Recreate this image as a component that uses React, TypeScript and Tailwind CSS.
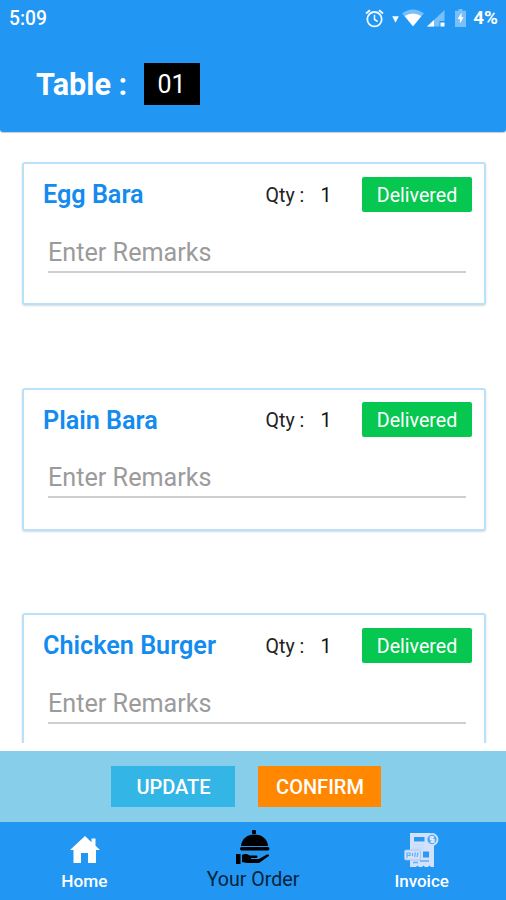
interface OrderItem {
  id: number;
  name: string;
  qty: number;
  status: string;
}

const orderItems: OrderItem[] = [
  { id: 1, name: 'Egg Bara', qty: 1, status: 'Delivered' },
  { id: 2, name: 'Plain Bara', qty: 1, status: 'Delivered' },
  { id: 3, name: 'Chicken Burger', qty: 1, status: 'Delivered' },
];

function StatusBar() {
  return (
    <div className="flex h-9 items-center justify-between pl-[9px] pr-2 text-[19.3px] font-medium text-white">
      <span className="pt-0.5">5:09</span>
      <div className="flex items-center">
        {/* Alarm */}
        <svg width="19" height="19" viewBox="0 0 19 19" fill="none" stroke="#f4faff" strokeWidth="1.8">
          <circle cx="9.5" cy="10.2" r="7.2" />
          <path d="M1 4.6 5 1.3M18 4.6l-4-3.3" strokeWidth="2" />
          <path d="M9.5 5.8v4.7l3.2 2" strokeWidth="1.5" />
        </svg>
        <svg className="ml-[8px] mt-0.5" width="7" height="7" viewBox="0 0 7 7" fill="#f4faff">
          <path d="M.2.3h6.6L3.5 6.8z" />
        </svg>
        {/* Wifi */}
        <svg className="ml-[3px]" width="22" height="18" viewBox="0 0 22 18">
          <path d="M0 4.2Q11-3.4 22 4.2L11 17.5z" fill="#79bff9" />
          <path d="M2.6 7Q11 1.8 19.4 7L11 17.2z" fill="#fff" />
        </svg>
        {/* Mobile signal */}
        <svg className="ml-[3px]" width="18" height="17" viewBox="0 0 18 17">
          <path d="M0 16.5 17.5 0v11h-5v5.5z" fill="#79bff9" />
          <path d="M0 16.5 7 10v6.5zM13.5 12.5h4v4h-4z" fill="#fff" />
        </svg>
        {/* Battery */}
        <svg className="ml-[10px]" width="11" height="18" viewBox="0 0 11 18">
          <path d="M3.5 0h4v1.7H11V18H0V1.7h3.5z" fill="#79bff9" />
          <path d="M6.5 3.8 2.6 10h2.3v4.5l3.7-6.2H6.5z" fill="#fff" />
        </svg>
        <span className="ml-[7px] text-[18.8px] font-bold">4%</span>
      </div>
    </div>
  );
}

function OrderCard({ item }: { item: OrderItem }) {
  return (
    <div className="h-[143px] shrink-0 rounded-[3px] border-2 border-[#b9e2f9] bg-white pl-[19px] pr-3 pt-3 shadow-[0_1px_2px_rgba(0,0,0,0.15)]">
      <div className="flex h-9 items-center">
        <span className="w-[222.5px] pt-0.5 text-[25.2px] font-semibold text-[#148bee]">{item.name}</span>
        <span className="w-[55px] pt-[3px] text-[19.6px] text-[#222]">Qty :</span>
        <span className="pt-[3px] text-[19.6px] text-[#111]">{item.qty}</span>
        <span className="ml-auto flex h-[35px] w-[110px] items-center justify-center rounded-[2px] bg-[#06c74f] pt-[3px] text-[19.6px] text-white">
          {item.status}
        </span>
      </div>
      <input
        className="ml-[5px] mt-[20px] block h-[40.5px] w-[418px] border-b-2 border-[#cfcfcf] bg-transparent pt-0.5 text-[25.2px] outline-none placeholder:text-[#9b9b9b]"
        placeholder="Enter Remarks"
      />
    </div>
  );
}

function HomeIcon() {
  return (
    <svg className="ml-px" width="30" height="28" viewBox="0 0 30 28" fill="#fff">
      <path d="M15 0 0 14h3.5v13H11V17h7v10h8V14h4l-4.5-4.2V2.5h-4v3.7z" />
    </svg>
  );
}

function ServeIcon() {
  return (
    <svg width="34" height="35" viewBox="0 0 34 35" fill="#000">
      <rect x="16" y="0" width="4" height="4" rx="1" />
      <path d="M5 16C5.5 9 11 4.5 18.5 4.5S31.5 9 32 16z" />
      <rect x="4" y="17" width="29.5" height="3.5" rx="1.7" />
      <path d="M0 24h4.5v10H0z" />
      <path d="M6 25c3-1.8 5.5-.8 8 .5h6c2 0 2 2.5 0 2.5h-5v1h8l7-4c2-.9 4-.2 2.5 1.2L23 33H11l-5-1z" />
    </svg>
  );
}

function InvoiceIcon() {
  return (
    <svg width="35" height="35" viewBox="0 0 35 35">
      <path d="M6 0h20l4 10v24H27l-1.5-1.5L24 34h-3l-1.5-1.5L18 34h-3l-1.5-1.5L12 34H6z" fill="#d3e2fc" />
      <path d="M10 4h10.5v4.5H10z" fill="#2b98f3" />
      <path d="M9 12h11M9 15h10" stroke="#bdd7fb" />
      <rect x="19" y="18.5" width="6" height="6" fill="#2b98f3" />
      <path d="M9 29.5h5M16 28h9" stroke="#5facf5" strokeWidth="1.5" />
      <circle cx="28" cy="6.5" r="5.6" fill="#51a9f6" stroke="#d3e2fc" strokeWidth="1.8" />
      <path d="M30 4h-3.5v2.5H30V9h-3.5M28.2 3v7" stroke="#e3edff" strokeWidth="1.3" fill="none" />
      <rect x=".5" y="17" width="16" height="10" rx="1.5" fill="#d3e2fc" stroke="#8fc3f8" strokeWidth=".8" />
      <path d="M3 25v-5h3v2.5H3M8.5 20v3M11.5 19.5l-1 4.5M14 19.5 13 24" stroke="#65adf5" strokeWidth="1.2" fill="none" />
    </svg>
  );
}

export default function App() {
  return (
    <div className="flex h-[900px] w-[506px] flex-col overflow-hidden whitespace-nowrap bg-white font-[Roboto,sans-serif]">
      <header className="h-[132px] shrink-0 rounded-b-[3px] bg-[#2196f3] shadow-[0_1px_1px_rgba(0,0,0,0.2)]">
        <StatusBar />
        <div className="flex h-24 items-center pl-9">
          <h1 className="w-[108px] pt-0.5 text-[30.6px] font-bold text-white">Table :</h1>
          <span className="flex h-[42px] w-[56px] items-center justify-center bg-black pr-px pt-px text-[25px] text-white">01</span>
        </div>
      </header>

      {/* Scrolling order list */}
      <main className="flex h-[611px] shrink-0 flex-col gap-[82.5px] overflow-hidden pl-[22px] pr-5 pt-[30px]">
        {orderItems.map((item) => (
          <OrderCard key={item.id} item={item} />
        ))}
      </main>

      <div className="mt-2 flex h-[71px] shrink-0 justify-center gap-[23px] bg-[#87ceeb] pr-[14px] pt-[15px] text-[20px] font-medium text-white">
        <button className="h-[41px] w-[124px] bg-[#33b5e5] pl-px pt-px">UPDATE</button>
        <button className="h-[41px] w-[123px] bg-[#ff8800] pl-px pt-px">CONFIRM</button>
      </div>

      <nav className="grid h-[78px] shrink-0 grid-cols-3 bg-[#2196f3]">
        <div className="flex flex-col items-center pt-[14px]">
          <HomeIcon />
          <span className="mt-[5px] text-[17.2px] font-medium leading-6 text-white">Home</span>
        </div>
        <div className="flex flex-col items-center pt-[8px]">
          <ServeIcon />
          <span className="mt-[3px] text-[19.6px] leading-6 text-[#06233b]">Your Order</span>
        </div>
        <div className="flex flex-col items-center pt-[11px]">
          <InvoiceIcon />
          <span className="mt-px text-[17px] font-medium leading-6 text-white">Invoice</span>
        </div>
      </nav>
    </div>
  );
}
